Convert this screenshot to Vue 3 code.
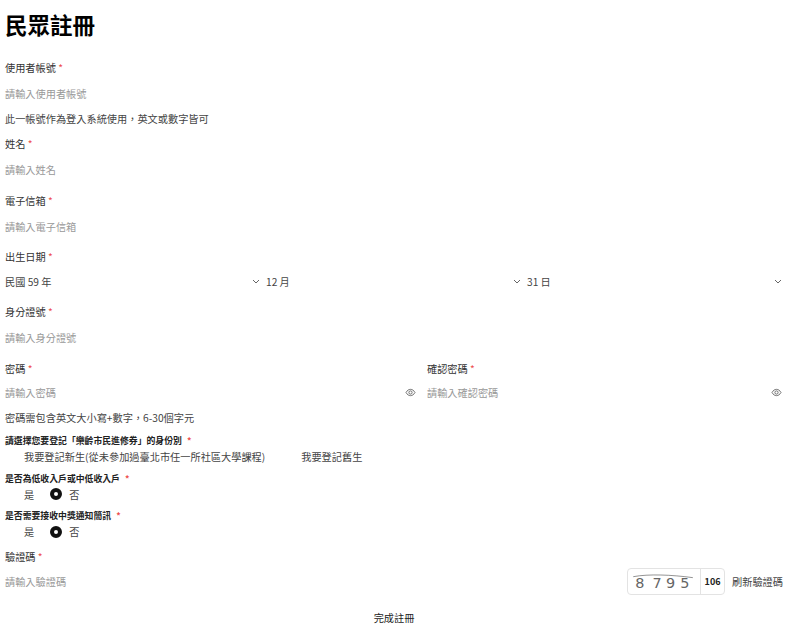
<script setup>
const selects = ["民國 59 年", "12 月", "31 日"];

const radioGroups = [
  { label: "是否為低收入戶或中低收入戶" },
  { label: "是否需要接收中獎通知簡訊" }
];
</script>

<template>
  <main class="register">
    <h1 class="title">民眾註冊</h1>

    <div class="field">
      <label class="label">使用者帳號 <span class="req">*</span></label>
      <div class="input">請輸入使用者帳號</div>
      <p class="help">此一帳號作為登入系統使用，英文或數字皆可</p>
    </div>

    <div class="field">
      <label class="label">姓名 <span class="req">*</span></label>
      <div class="input">請輸入姓名</div>
    </div>

    <div class="field spaced">
      <label class="label">電子信箱 <span class="req">*</span></label>
      <div class="input">請輸入電子信箱</div>
    </div>

    <div class="field spaced">
      <label class="label">出生日期 <span class="req">*</span></label>
      <div class="select-row">
        <div v-for="item in selects" :key="item" class="select">
          <span class="select-text">{{ item }}</span>
          <svg class="chevron" viewBox="0 0 8 5" aria-hidden="true">
            <path d="M1 1l3 3 3-3" />
          </svg>
        </div>
      </div>
    </div>

    <div class="field spaced">
      <label class="label">身分證號 <span class="req">*</span></label>
      <div class="input">請輸入身分證號</div>
    </div>

    <div class="password-row spaced">
      <div class="field">
        <label class="label">密碼 <span class="req">*</span></label>
        <div class="input with-icon">
          <span>請輸入密碼</span>
          <svg class="eye" viewBox="0 0 12 10" aria-hidden="true">
            <path d="M1 5c1.4-2.4 3-3.5 5-3.5s3.600 1.100 5 3.500c-1.400 2.400-3 3.500-5 3.500S2.400 7.400 1 5z" />
            <circle cx="6" cy="5" r="1.800" />
          </svg>
        </div>
      </div>
      <div class="field">
        <label class="label">確認密碼 <span class="req">*</span></label>
        <div class="input with-icon">
          <span>請輸入確認密碼</span>
          <svg class="eye" viewBox="0 0 12 10" aria-hidden="true">
            <path d="M1 5c1.4-2.4 3-3.5 5-3.5s3.600 1.100 5 3.500c-1.400 2.400-3 3.500-5 3.500S2.400 7.400 1 5z" />
            <circle cx="6" cy="5" r="1.800" />
          </svg>
        </div>
      </div>
    </div>
    <p class="help password-help">密碼需包含英文大小寫+數字，6-30個字元</p>

    <div class="choice first-choice">
      <div class="choice-label">請選擇您要登記「樂齡市民進修券」的身份別<span class="req">*</span></div>
      <div class="choice-options">
        <span class="option-text">我要登記新生(從未參加過臺北市任一所社區大學課程)</span>
        <span class="option-text old-student">我要登記舊生</span>
      </div>
    </div>

    <div v-for="group in radioGroups" :key="group.label" class="choice">
      <div class="choice-label">{{ group.label }}<span class="req">*</span></div>
      <div class="choice-options">
        <span class="option-text">是</span>
        <span class="radio" aria-hidden="true"></span>
        <span class="option-text">否</span>
      </div>
    </div>

    <div class="field captcha-field">
      <label class="label">驗證碼 <span class="req">*</span></label>
      <div class="captcha-row">
        <div class="input captcha-input">請輸入驗證碼</div>
        <div class="captcha-box">
          <div class="captcha-image">
            <svg viewBox="0 0 72 26" aria-hidden="true">
              <text x="6" y="20">8</text>
              <text x="24" y="20">7</text>
              <text x="38" y="20">9</text>
              <text x="53" y="20">5</text>
              <path d="M4 8c16-3 40-2 62 1" />
            </svg>
          </div>
          <div class="captcha-count">106</div>
        </div>
        <span class="refresh">刷新驗證碼</span>
      </div>
    </div>

    <div class="submit-row">
      <button class="submit" type="button">完成註冊</button>
    </div>
  </main>
</template>

<style>
body {
  background: #fff;
}
</style>

<style scoped>
.register {
  box-sizing: border-box;
  width: 800px;
  height: 635px;
  overflow: hidden;
  padding: 10px 17px 0 5px;
  color: #333;
  font-family: "Noto Sans CJK TC", sans-serif;
  font-size: 10.2px;
}

.title {
  margin: 0 0 22px;
  color: #000;
  font-size: 22.5px;
  font-weight: 700;
  line-height: 28px;
}

.field {
  min-width: 0;
}

.spaced {
  margin-top: 14.6px;
}

.label {
  display: block;
  color: #333;
  line-height: 16px;
}

.req {
  color: #ee4d4d;
}

.input {
  margin-top: 9px;
  color: #999;
  line-height: 17px;
}

.help {
  margin: 8px 0 0;
  color: #444;
  line-height: 17px;
}

.field + .field {
  margin-top: 9px;
}

.field + .field.spaced {
  margin-top: 14.6px;
}

.select-row {
  display: grid;
  grid-template-columns: repeat(3, 1fr);
  gap: 5px;
  margin-top: 7.6px;
  line-height: 17px;
}

.select {
  display: flex;
  align-items: center;
  justify-content: space-between;
  padding-right: 1px;
  color: #444;
}

.chevron {
  width: 8px;
  height: 5px;
  fill: none;
  stroke: #555;
  stroke-width: 0.9;
}

.password-row {
  display: grid;
  grid-template-columns: 1fr 355px;
  gap: 11px;
  margin-right: 1px;
}

.password-row .field + .field {
  margin-top: 0;
}

.with-icon {
  display: flex;
  align-items: center;
  justify-content: space-between;
  margin-top: 7.4px;
}

.eye {
  width: 11px;
  height: 9px;
  fill: none;
  stroke: #555;
  stroke-width: 0.9;
}

.password-help {
  margin-top: 8px;
}

.choice {
  margin-top: 7px;
}

.first-choice {
  margin-top: 8px;
}

.choice-label {
  color: #222;
  font-size: 8.85px;
  font-weight: 700;
  line-height: 14px;
}

.choice-label .req {
  margin-left: 5px;
}

.choice-options {
  display: flex;
  align-items: center;
  height: 16.5px;
  padding-left: 19px;
  color: #444;
}

.old-student {
  margin-left: 36px;
}

.radio {
  box-sizing: border-box;
  width: 12px;
  height: 12px;
  margin: 0 7px 0 16px;
  border: 4px solid #111;
  border-radius: 50%;
  background: #fff;
}

.captcha-field {
  margin-top: 9.5px;
}

.captcha-row {
  display: flex;
  align-items: center;
  margin-top: 2.5px;
}

.captcha-input {
  flex: 1;
  margin-top: 0;
}

.captcha-box {
  display: flex;
  width: 98px;
  height: 27px;
  box-sizing: border-box;
  border: 1px solid #e3e3e3;
  border-radius: 4px;
}

.captcha-image {
  width: 72px;
  border-right: 1px solid #e3e3e3;
}

.captcha-image svg {
  display: block;
  width: 100%;
  height: 100%;
}

.captcha-image text {
  fill: #666;
  font-family: "DejaVu Sans", sans-serif;
  font-size: 15px;
}

.captcha-image path {
  fill: none;
  stroke: #444;
  stroke-width: 0.6;
}

.captcha-count {
  flex: 1;
  color: #222;
  font-size: 9px;
  font-weight: 700;
  line-height: 25px;
  text-align: center;
}

.refresh {
  margin-left: 7px;
  color: #444;
}

.submit-row {
  display: flex;
  justify-content: center;
  margin-top: 14px;
}

.submit {
  padding: 0;
  border: 0;
  background: transparent;
  color: #222;
  font: inherit;
  line-height: 17px;
}
</style>
